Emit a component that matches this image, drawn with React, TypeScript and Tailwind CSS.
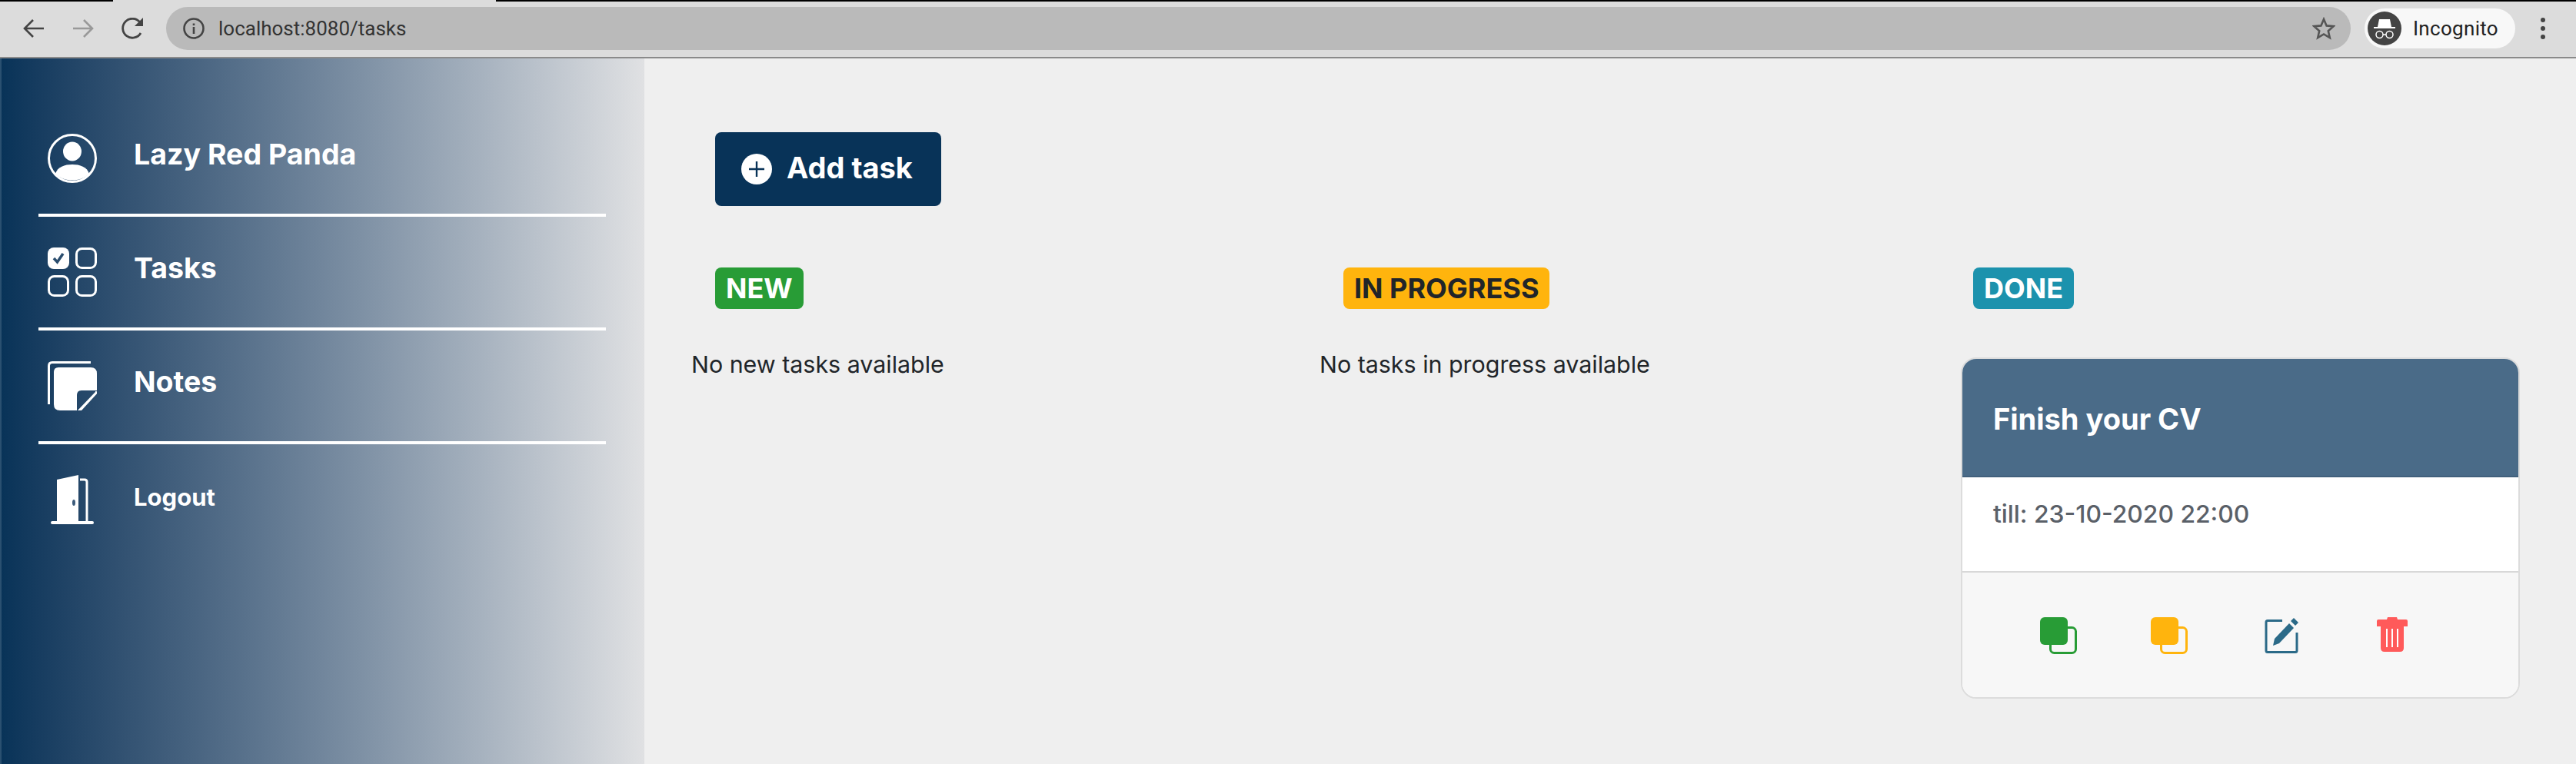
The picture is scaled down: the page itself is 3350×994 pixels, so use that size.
import React from 'react';

const UserIcon = () => (
  <svg width="64" height="64" viewBox="0 0 64 64" fill="none">
    <circle cx="32" cy="32" r="30.5" stroke="white" strokeWidth="3" />
    <ellipse cx="32" cy="23" rx="12" ry="12.5" fill="white" />
    <path d="M10 52 C13 43 22 40 32 40 C42 40 51 43 54 52 C48 58 40 60.5 32 60.5 C24 60.5 16 58 10 52 Z" fill="white" />
  </svg>
);

const TasksIcon = () => (
  <svg width="64" height="64" viewBox="0 0 64 64" fill="none">
    <rect x="0" y="0" width="28" height="28" rx="8" fill="white" />
    <path d="M8 14 L12.5 19 L20 8" stroke="#2a4d6e" strokeWidth="3.5" fill="none" />
    <rect x="37.5" y="1.5" width="25" height="25" rx="7" stroke="white" strokeWidth="3" />
    <rect x="1.5" y="37.5" width="25" height="25" rx="7" stroke="white" strokeWidth="3" />
    <rect x="37.5" y="37.5" width="25" height="25" rx="7" stroke="white" strokeWidth="3" />
  </svg>
);

const NotesIcon = () => (
  <svg width="64" height="64" viewBox="0 0 64 64" fill="none">
    <path d="M1.5 56 V6 Q1.5 1.5 6 1.5 H56" stroke="white" strokeWidth="3" />
    <path d="M14 8 H56 Q64 8 64 16 V38 H44 Q38 38 38 44 V64 H16 Q8 64 8 56 V14 Q8 8 14 8 Z" fill="white" />
    <path d="M41 64 L64 40 L42 64 Z" stroke="white" strokeWidth="3" />
  </svg>
);

const DoorIcon = () => (
  <svg width="56" height="64" viewBox="0 0 56 64" fill="none">
    <path d="M8 6 L36 0 V60 H8 Z" fill="white" />
    <ellipse cx="30" cy="36" rx="2" ry="4" fill="#3d5c7c" />
    <path d="M38 6 H44 Q47 6 47 9 V60" stroke="white" strokeWidth="3" />
    <rect x="0" y="60" width="56" height="4" rx="2" fill="white" />
  </svg>
);

const CopyIcon = ({ color }: { color: string }) => (
  <svg width="48" height="48" viewBox="0 0 48 48" fill="none">
    <rect x="13.5" y="13.5" width="33" height="33" rx="5" stroke={color} strokeWidth="3" />
    <rect x="0" y="0" width="36" height="36" rx="6" fill={color} />
  </svg>
);

const EditIcon = () => (
  <svg width="48" height="48" viewBox="0 0 48 48" fill="none">
    <path d="M27 4.5 H8 Q6 4.5 6 6.5 V43.5 Q6 45.5 8 45.5 H44 Q46 45.5 46 43.5 V20" stroke="#2b6a88" strokeWidth="3" />
    <path d="M15 37 L17 28 L36 8 L42 14 L23 34 Z" fill="#2b6a88" />
    <path d="M38 5 L42 1 L48 7 L44 11 Z" fill="#2b6a88" />
  </svg>
);

const TrashIcon = () => (
  <svg width="48" height="48" viewBox="0 0 48 48" fill="none">
    <path d="M20 0 H32 L33 3 H44 Q46 3 46 5 V12 H6 V5 Q6 3 8 3 H19 Z" fill="#ff5a5a" />
    <path d="M11 12 H41 V40 Q41 45 36 45 H16 Q11 45 11 40 Z" fill="#ff5a5a" />
    <rect x="18" y="15" width="2" height="24" fill="white" />
    <rect x="25" y="15" width="2" height="24" fill="white" />
    <rect x="32" y="15" width="2" height="24" fill="white" />
  </svg>
);

const BrowserBar = () => (
  <div className="relative flex h-[76px] shrink-0 items-center border-b-2 border-[#8a8a8a] bg-[#dcdcdc] font-['Roboto',sans-serif]">
    {/* Window edge above the toolbar */}
    <div className="absolute left-0 top-0 h-[2px] w-[147px] bg-black" />
    <div className="absolute left-[645px] right-0 top-0 h-[2px] bg-black" />
    <svg className="ml-[30px] shrink-0" width="28" height="26" viewBox="0 0 28 26" fill="none">
      <path d="M27 13 H3 M13 2 L2 13 L13 24" stroke="#444" strokeWidth="2.6" />
    </svg>
    <svg className="ml-[36px] shrink-0" width="28" height="26" viewBox="0 0 28 26" fill="none">
      <path d="M1 13 H25 M15 2 L26 13 L15 24" stroke="#999" strokeWidth="2.6" />
    </svg>
    <svg className="ml-[36px] shrink-0" width="30" height="28" viewBox="0 0 30 28" fill="none">
      <path d="M25 20 A12.5 12.5 0 1 1 24 6" stroke="#444" strokeWidth="2.8" />
      <path d="M28 0 V11 H17 Z" fill="#444" />
    </svg>
    <div className="ml-[28px] flex h-[56px] w-[2841px] shrink-0 items-center rounded-full bg-[#bababa] pl-[22px] pr-[20px]">
      <svg width="28" height="28" viewBox="0 0 28 28" fill="none">
        <circle cx="14" cy="14" r="12.5" stroke="#444" strokeWidth="2.6" />
        <rect x="12.7" y="12" width="2.6" height="9" fill="#444" />
        <rect x="12.7" y="7.5" width="2.6" height="2.6" fill="#444" />
      </svg>
      <span className="ml-[18px] text-[26px] text-[#333]">localhost:8080/tasks</span>
      <svg className="ml-auto" width="30" height="30" viewBox="0 0 30 30" fill="none">
        <path d="M15 3 L18.6 11.4 L27.6 12.2 L20.8 18.2 L22.8 27 L15 22.4 L7.2 27 L9.2 18.2 L2.4 12.2 L11.4 11.4 Z" stroke="#555" strokeWidth="2.6" />
      </svg>
    </div>
    <div className="ml-[18px] flex h-[52px] w-[196px] shrink-0 items-center rounded-full bg-[#f8f8f8] pl-[4px]">
      <svg width="44" height="44" viewBox="0 0 44 44">
        <circle cx="22" cy="22" r="22" fill="#444" />
        <path d="M15 10 L29 10 L31 20 H13 Z" fill="white" />
        <rect x="8" y="20" width="28" height="2" fill="white" />
        <circle cx="15.5" cy="30" r="4.5" fill="none" stroke="white" strokeWidth="1.5" />
        <circle cx="28.5" cy="30" r="4.5" fill="none" stroke="white" strokeWidth="1.5" />
        <path d="M20 30 H24" stroke="white" strokeWidth="1.5" />
      </svg>
      <span className="ml-[15px] text-[26px] tracking-[0.3px] text-[#222]">Incognito</span>
    </div>
    <div className="ml-[33px] flex flex-col gap-[5px]">
      <div className="h-[6px] w-[6px] rounded-full bg-[#444]" />
      <div className="h-[6px] w-[6px] rounded-full bg-[#444]" />
      <div className="h-[6px] w-[6px] rounded-full bg-[#444]" />
    </div>
  </div>
);

const NavRow = ({ icon, label, small }: { icon: React.ReactNode; label: string; small?: boolean }) => (
  <div className="flex h-[144px] items-center">
    <div className="flex w-[64px] justify-center">{icon}</div>
    <span className={`ml-[48px] font-bold text-white ${small ? 'pb-[5px] text-[31px]' : 'pb-[9px] text-[37.5px]'}`}>{label}</span>
  </div>
);

const Sidebar = () => (
  <aside className="w-[838px] shrink-0 border-l-2 border-[#2a5070] bg-gradient-to-r from-[#083358] to-[#e0e1e3] pt-[58px]">
    <div className="ml-[48px] w-[738px]">
      <div className="pl-[12px]"><NavRow icon={<UserIcon />} label="Lazy Red Panda" /></div>
      <div className="h-[4px] bg-white" />
      <div className="pl-[12px]"><NavRow icon={<TasksIcon />} label="Tasks" /></div>
      <div className="h-[4px] bg-white" />
      <div className="pl-[12px]"><NavRow icon={<NotesIcon />} label="Notes" /></div>
      <div className="h-[4px] bg-white" />
      <div className="pl-[12px]"><NavRow icon={<DoorIcon />} label="Logout" small /></div>
    </div>
  </aside>
);

const Badge = ({ label, className }: { label: string; className: string }) => (
  <span className={`ml-[31px] inline-flex h-[54px] items-center rounded-[8px] px-[14px] text-[36px] font-bold ${className}`}>{label}</span>
);

const Column = ({ children }: { children: React.ReactNode }) => <div className="flex flex-col items-start">{children}</div>;

export default function App() {
  return (
    <div className="flex h-[994px] w-[3350px] flex-col overflow-hidden bg-[#efefef] font-['Inter',sans-serif]">
      <BrowserBar />
      <div className="flex flex-1">
        <Sidebar />
        <main className="flex-1 pl-[61px] pt-[96px]">
          <button className="ml-[31px] flex h-[96px] w-[294px] items-center rounded-[8px] bg-[#083358] pl-[34px] text-[38px] font-bold text-white">
            <svg width="40" height="40" viewBox="0 0 40 40">
              <circle cx="20" cy="20" r="20" fill="white" />
              <path d="M20 10 V30 M10 20 H30" stroke="#083358" strokeWidth="2.4" />
            </svg>
            <span className="ml-[19px] pb-[4px]">Add task</span>
          </button>
          <div className="mt-[80px] grid grid-cols-[817px_819px_1fr]">
            <Column>
              <Badge label="NEW" className="bg-[#289c36] text-white" />
              <p className="mt-[50px] text-[30.4px] leading-[44px] text-[#212529]">No new tasks available</p>
            </Column>
            <Column>
              <Badge label="IN PROGRESS" className="bg-[#ffb40d] text-[#212529]" />
              <p className="mt-[50px] text-[30.4px] leading-[44px] text-[#212529]">No tasks in progress available</p>
            </Column>
            <Column>
              <Badge label="DONE" className="bg-[#1c92ad] text-white" />
              <div className="ml-[15px] mt-[63px] w-[727px] overflow-hidden rounded-[20px] border-2 border-[#dcdcdc] bg-white">
                <div className="flex h-[154px] items-center border-b-2 border-[#41607c] bg-[#4a6b88] pl-[40px] pt-[5px] text-[38px] font-bold text-white">
                  <span>Finish your CV</span>
                </div>
                <div className="h-[122px] pl-[40px] pt-[24px] text-[31.8px] font-medium text-[#5a6068]">till: 23-10-2020 22:00</div>
                <div className="flex h-[164px] gap-[96px] border-t-2 border-[#d8d8d8] bg-[#f7f7f7] pl-[101px] pt-[58px]">
                  <CopyIcon color="#289c36" />
                  <CopyIcon color="#ffb40d" />
                  <EditIcon />
                  <TrashIcon />
                </div>
              </div>
            </Column>
          </div>
        </main>
      </div>
    </div>
  );
}
